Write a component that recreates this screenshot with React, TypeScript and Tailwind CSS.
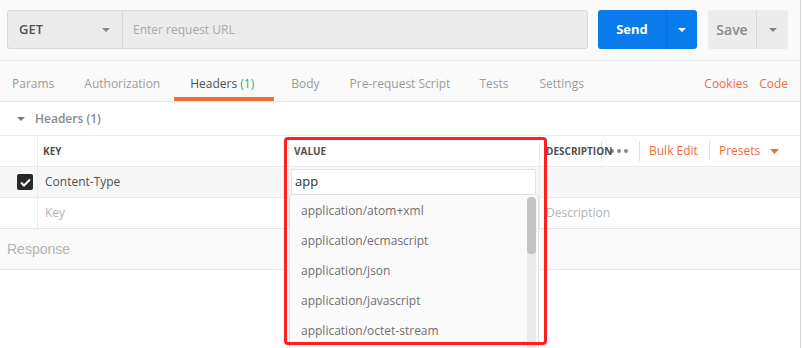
import React from "react";

const Caret = ({ color, w = 8, h = 4 }: { color: string; w?: number; h?: number }) => (
  <svg width={w} height={h} viewBox={`0 0 ${w} ${h}`}>
    <path d={`M0 0 L${w} 0 L${w / 2} ${h} Z`} fill={color} />
  </svg>
);

const options = [
  "application/atom+xml",
  "application/ecmascript",
  "application/json",
  "application/javascript",
  "application/octet-stream",
];

export default function App() {
  return (
    <div className="relative w-[802px] h-[348px] overflow-hidden bg-white font-['Open_Sans',sans-serif]">
      <div className="w-[801px] h-full border-r border-[#d6d6d6]">
        {/* Top bar */}
        <div className="h-[61px] bg-[#fafafa] border-b border-[#ececec] flex items-start pt-[10px] pl-[7px]">
          <div className="flex w-[581px] h-[39px] border border-[#d9d9d9] rounded-[3px] bg-[#ececec]">
            <div className="w-[115px] h-full border-r border-[#d9d9d9] flex items-center pl-[11px] pr-[12px] justify-between">
              <span className="text-[13px] font-semibold text-[#505050]">GET</span>
              <Caret color="#858585" />
            </div>
            <div className="flex-1 flex items-center pl-[10px]">
              <span className="text-[12px] text-[#a9a9a9]">Enter request URL</span>
            </div>
          </div>
          <div className="ml-[10px] flex w-[99px] h-[39px] rounded-[3px] bg-[#097bed]">
            <div className="w-[69px] h-full border-r border-[#0a6fd6] flex items-center justify-center">
              <span className="text-[13px] font-bold text-white">Send</span>
            </div>
            <div className="flex-1 flex items-center justify-center">
              <Caret color="#ffffff" />
            </div>
          </div>
          <div className="ml-[11px] flex w-[80px] h-[39px] rounded-[3px] bg-[#ececec]">
            <div className="w-[49px] h-full border-r border-[#d9d9d9] flex items-center justify-center">
              <span className="text-[14px] font-semibold text-[#8a8a8a]">Save</span>
            </div>
            <div className="flex-1 flex items-center justify-center">
              <Caret color="#858585" />
            </div>
          </div>
        </div>

        {/* Tabs */}
        <div className="h-[41px] bg-[#fafafa] border-b border-[#e6e6e6] flex items-end pb-[8px] pl-[12px] pr-[12px] text-[12px]">
          <div className="flex text-[#9a9a9a]">
            <span>Params</span>
            <span className="ml-[30px]">Authorization</span>
            <span className="ml-[30px] relative text-[#505050]">
              Headers <span className="text-[#26b47f]">(1)</span>
              <span className="absolute left-[-16px] right-[-20px] bottom-[-8px] h-[4px] bg-[#f26b3a]" />
            </span>
            <span className="ml-[37px]">Body</span>
            <span className="ml-[30px]">Pre-request Script</span>
            <span className="ml-[29px]">Tests</span>
            <span className="ml-[31px]">Settings</span>
          </div>
          <div className="ml-auto flex gap-[11px] text-[#f26b3a]">
            <span>Cookies</span>
            <span>Code</span>
          </div>
        </div>

        {/* Section title */}
        <div className="h-[33px] flex items-center pl-[17px] gap-[10px]">
          <Caret color="#7a7a7a" />
          <span className="text-[12px] font-semibold text-[#8a8a8a]">Headers (1)</span>
        </div>

        {/* Table header */}
        <div className="h-[31px] border-t border-[#ebebeb] flex">
          <div className="w-[38px] border-r border-[#ebebeb]" />
          <div className="w-[251px] border-r border-[#ebebeb] flex items-center pl-[5px]">
            <span className="text-[10px] font-bold text-[#505050]">KEY</span>
          </div>
          <div className="w-[251px] border-r border-[#ebebeb] flex items-center pl-[5px]">
            <span className="text-[10px] font-bold text-[#505050]">VALUE</span>
          </div>
          <div className="flex-1 flex items-center">
            <div className="relative w-[62px] h-[20px] border-r border-[#e0e0e0] flex items-center pl-[6px]">
              <span className="text-[10px] font-bold text-[#505050] whitespace-nowrap">DESCRIPTION</span>
            </div>
            <div className="w-[38px] h-[20px] border-r border-[#e0e0e0] flex items-center pl-[8px] gap-[3px]">
              <span className="w-[4px] h-[4px] rounded-full bg-[#8a8a8a]" />
              <span className="w-[4px] h-[4px] rounded-full bg-[#8a8a8a]" />
              <span className="w-[4px] h-[4px] rounded-full bg-[#8a8a8a]" />
            </div>
            <div className="w-[70px] h-[20px] border-r border-[#e0e0e0] flex items-center pl-[9px]">
              <span className="text-[12px] text-[#f26b3a]">Bulk Edit</span>
            </div>
            <div className="flex items-center pl-[9px] gap-[10px]">
              <span className="text-[12px] text-[#f26b3a]">Presets</span>
              <Caret color="#f26b3a" w={9} h={5} />
            </div>
          </div>
        </div>

        {/* Row: Content-Type */}
        <div className="h-[31px] border-t border-[#ebebeb] bg-[#f7f7f7] flex">
          <div className="w-[38px] border-r border-[#ebebeb] flex items-center pl-[17px]">
            <div className="w-[16px] h-[16px] rounded-[2px] bg-[#282828] flex items-center justify-center">
              <svg width="11" height="9" viewBox="0 0 11 9">
                <path d="M1 4.5 L4 7.5 L10 1.5" stroke="#ffffff" strokeWidth="2" fill="none" />
              </svg>
            </div>
          </div>
          <div className="w-[251px] border-r border-[#ebebeb] flex items-center pl-[7px]">
            <span className="text-[12px] text-[#505050]">Content-Type</span>
          </div>
          <div className="w-[251px] border-r border-[#ebebeb] flex items-start pt-[2px] pl-[2px]">
            <div className="w-[245px] h-[26px] bg-white border border-[#e3e3e3] flex items-center pl-[3px]">
              <span className="text-[13px] text-[#303030]">app</span>
            </div>
          </div>
          <div className="flex-1" />
        </div>

        {/* Row: empty */}
        <div className="h-[31px] border-t border-[#ebebeb] flex">
          <div className="w-[38px] border-r border-[#ebebeb]" />
          <div className="w-[251px] border-r border-[#ebebeb] flex items-center pl-[7px]">
            <span className="text-[12px] text-[#b3b3b3]">Key</span>
          </div>
          <div className="w-[251px] border-r border-[#ebebeb]" />
          <div className="flex-1 flex items-center pl-[6px]">
            <span className="text-[12px] text-[#b3b3b3]">Description</span>
          </div>
        </div>

        {/* Response */}
        <div className="h-[42px] border-t border-b border-[#e6e6e6] bg-[#fafafa] flex items-center pl-[7px]">
          <span className="font-['Liberation_Sans',sans-serif] text-[14px] text-[#b3b3b3]">Response</span>
        </div>
      </div>

      {/* Autocomplete dropdown */}
      <div className="absolute left-[289px] top-[194px] w-[250px] h-[170px] bg-[#fafafa] border border-[#e0e0e0] rounded-t-[3px] flex">
        <div className="flex-1 flex flex-col pt-[1px]">
          {options.map((o) => (
            <div key={o} className="h-[30px] flex items-center pl-[11px]">
              <span className="text-[12px] text-[#707070]">{o}</span>
            </div>
          ))}
        </div>
        <div className="w-[9px] mr-[2px] mt-[2px] bg-[#ebebeb] rounded-t-[4px]">
          <div className="h-[57px] bg-[#c4c4c4] rounded-[4px]" />
        </div>
      </div>

      {/* Red annotation box */}
      <div className="absolute left-[284px] top-[137px] w-[263px] h-[208px] border-[3px] border-[#ff1f1f] rounded-[4px]" />
    </div>
  );
}
